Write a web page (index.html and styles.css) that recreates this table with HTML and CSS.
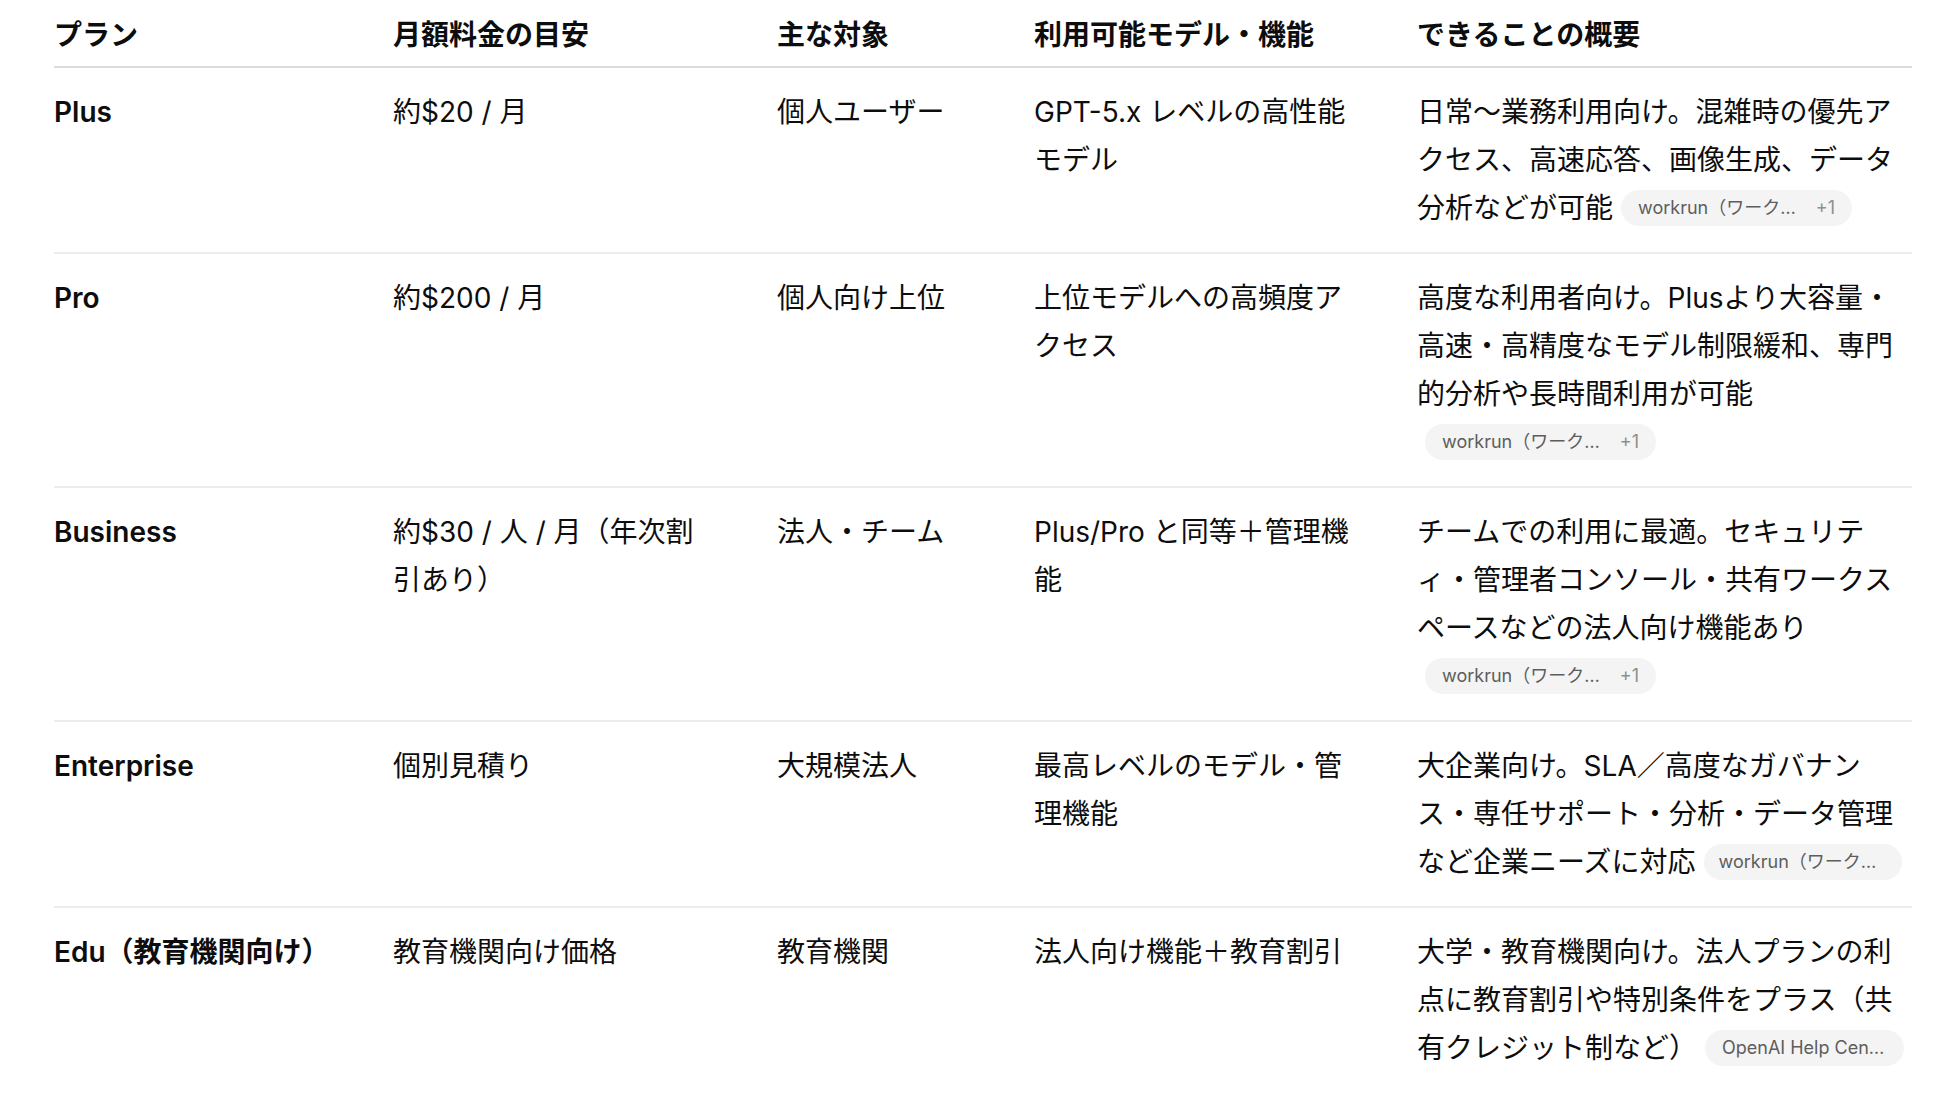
FILE: index.html
```html
<!DOCTYPE html>
<html lang="ja">
<head>
<meta charset="utf-8">
<title>プラン比較</title>
<link rel="stylesheet" href="styles.css">
</head>
<body>
<main class="page">
  <table class="plans">
    <colgroup>
      <col class="c-plan">
      <col class="c-price">
      <col class="c-target">
      <col class="c-model">
      <col class="c-summary">
    </colgroup>
    <thead>
      <tr>
        <th>プラン</th>
        <th class="price">月額料金の目安</th>
        <th>主な対象</th>
        <th class="model">利用可能モデル・機能</th>
        <th class="summary">できることの概要</th>
      </tr>
    </thead>
    <tbody>
      <tr>
        <td class="plan">Plus</td>
        <td class="price">約$20 / 月</td>
        <td>個人ユーザー</td>
        <td class="model">GPT-5.x レベルの高性能モデル</td>
        <td class="summary">日常〜業務利用向け。混雑時の優先アクセス、高速応答、画像生成、データ分析などが可能<span class="chip"><span class="chip-label">workrun（ワーク…</span><span class="chip-more">+1</span></span></td>
      </tr>
      <tr>
        <td class="plan">Pro</td>
        <td class="price">約$200 / 月</td>
        <td>個人向け上位</td>
        <td class="model">上位モデルへの高頻度アクセス</td>
        <td class="summary">高度な利用者向け。Plusより大容量・高速・高精度なモデル制限緩和、専門的分析や長時間利用が可能<span class="chip"><span class="chip-label">workrun（ワーク…</span><span class="chip-more">+1</span></span></td>
      </tr>
      <tr>
        <td class="plan">Business</td>
        <td class="price">約$30 / 人 / 月（年次割引あり）</td>
        <td>法人・チーム</td>
        <td class="model">Plus/Pro と同等＋管理機能</td>
        <td class="summary">チームでの利用に最適。セキュリティ・管理者コンソール・共有ワークスペースなどの法人向け機能あり<span class="chip"><span class="chip-label">workrun（ワーク…</span><span class="chip-more">+1</span></span></td>
      </tr>
      <tr>
        <td class="plan">Enterprise</td>
        <td class="price">個別見積り</td>
        <td>大規模法人</td>
        <td class="model">最高レベルのモデル・管理機能</td>
        <td class="summary">大企業向け。SLA／高度なガバナンス・専任サポート・分析・データ管理<span class="keep">など企業ニーズに対応<span class="chip chip-single"><span class="chip-label">workrun（ワーク…</span></span></span></td>
      </tr>
      <tr>
        <td class="plan">Edu（教育機関向け）</td>
        <td class="price">教育機関向け価格</td>
        <td>教育機関</td>
        <td class="model">法人向け機能＋教育割引</td>
        <td class="summary">大学・教育機関向け。法人プランの利点に教育割引や特別条件をプラス（共<span class="keep">有クレジット制など）<span class="chip chip-source"><span class="chip-label">OpenAI Help Cen…</span></span></span></td>
      </tr>
    </tbody>
  </table>
</main>
</body>
</html>
```

FILE: styles.css
```css
html, body {
  margin: 0;
  background: #ffffff;
}

body {
  font-family: Inter, "Noto Sans CJK JP", sans-serif;
  color: #0d0d0d;
  font-size: 28px;
  line-height: 48px;
}

.page {
  padding: 11px 46px 0 54px;
}

.plans {
  width: 1858px;
  table-layout: fixed;
  border-collapse: collapse;
}

.c-plan { width: 339px; }
.c-price { width: 384px; }
.c-target { width: 257px; }
.c-model { width: 383px; }
.c-summary { width: 495px; }

th, td {
  text-align: left;
  vertical-align: top;
  padding: 20px 32px 20px 0;
}

th {
  font-weight: 600;
  padding-top: 0;
  padding-bottom: 7px;
  border-bottom: 2px solid #dcdcdc;
}

tbody tr {
  border-bottom: 2px solid #ededed;
}

tbody tr:last-child {
  border-bottom: 0;
}

.plan {
  font-weight: 600;
}

.price { padding-right: 74px; }
.model { padding-right: 55px; }
.summary { padding-right: 11px; }

.keep {
  white-space: nowrap;
}

.chip {
  display: inline-flex;
  align-items: center;
  vertical-align: middle;
  height: 36px;
  margin-left: 8px;
  padding: 0 17px;
  border-radius: 18px;
  background: #f4f4f4;
  color: #5d5d5d;
  font-size: 18px;
  line-height: 1;
  white-space: nowrap;
  position: relative;
  top: -2px;
}

.chip-more {
  margin-left: 20px;
  color: #8f8f8f;
}

.chip-single {
  padding-left: 15px;
  padding-right: 26px;
}

.chip-source {
  padding-right: 20px;
}
```
